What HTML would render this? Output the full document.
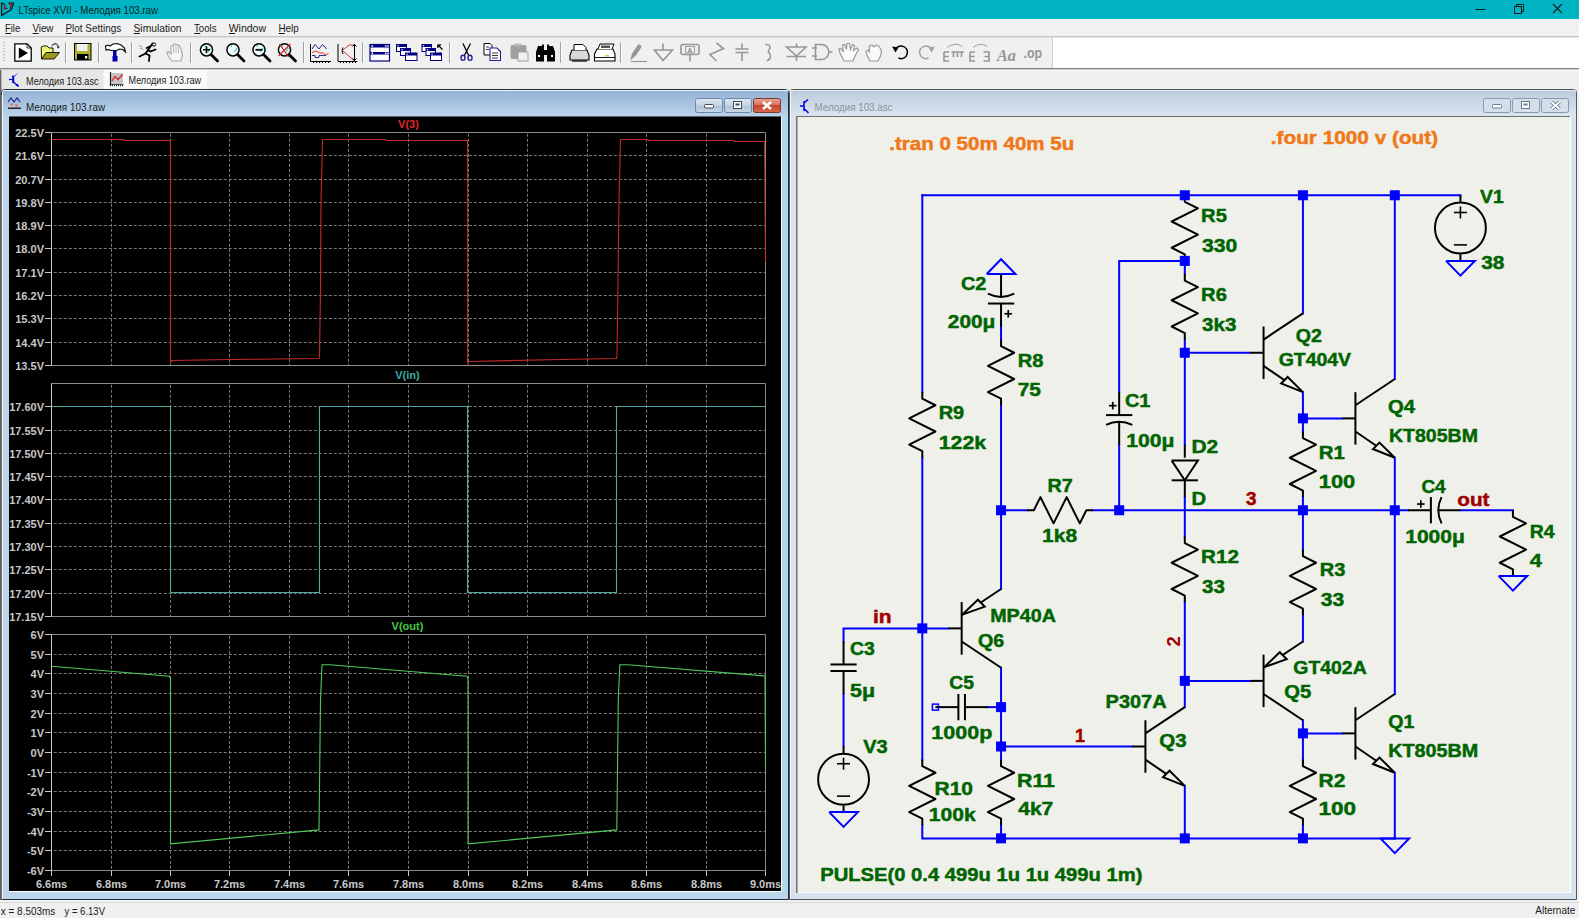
<!DOCTYPE html>
<html><head><meta charset="utf-8"><title>LTspice</title>
<style>html,body{margin:0;padding:0;width:1579px;height:918px;overflow:hidden;background:#f0f0f0}
svg{display:block;font-family:"Liberation Sans",sans-serif}</style></head>
<body><svg width="1579" height="918" viewBox="0 0 1579 918">
<rect x="0" y="0" width="1579" height="918" fill="#f0f0f0"/>
<rect x="0" y="0" width="1579" height="19" fill="#00b4c3"/>
<text x="18.50" y="13.60" font-size="11.6" font-weight="normal" fill="#0a1f24" text-anchor="start" textLength="139.5" lengthAdjust="spacingAndGlyphs" >LTspice XVII - Мелодия 103.raw</text>
<path d="M1.6 2.8 V15.4 L11.2 9.8 L13.6 3.2 H8.5 M1.6 2.8 L4.5 4.3" stroke="#101820" stroke-width="1.3" fill="none" stroke-linejoin="round"/>
<path d="M4.8 4.8 L4.6 8.6 H7.6 M8.6 3.8 H12.6 M11.2 3.8 L10.6 8.8" stroke="#801818" stroke-width="1.5" fill="none"/>
<path d="M1475.5 9.5 H1485.5" stroke="#1a1a1a" stroke-width="1"/>
<g stroke="#1a1a1a" stroke-width="1" fill="none"><rect x="1514.5" y="6.5" width="7" height="7"/><path d="M1516.5 6.5 V4.5 H1523.5 V11.5 H1521.5"/></g>
<path d="M1553 4 L1562 13 M1562 4 L1553 13" stroke="#1a1a1a" stroke-width="1.1"/>
<rect x="0" y="19" width="1579" height="17" fill="#f1f1f1"/>
<rect x="0" y="36" width="1579" height="1.6" fill="#c6c6c6"/>
<text x="4.90" y="31.80" font-size="11.5" font-weight="normal" fill="#1a1a1a" text-anchor="start" textLength="15.3" lengthAdjust="spacingAndGlyphs" >File</text>
<rect x="5.2" y="33" width="6" height="1" fill="#1a1a1a"/>
<text x="32.40" y="31.80" font-size="11.5" font-weight="normal" fill="#1a1a1a" text-anchor="start" textLength="21.0" lengthAdjust="spacingAndGlyphs" >View</text>
<rect x="32.7" y="33" width="6" height="1" fill="#1a1a1a"/>
<text x="65.40" y="31.80" font-size="11.5" font-weight="normal" fill="#1a1a1a" text-anchor="start" textLength="55.9" lengthAdjust="spacingAndGlyphs" >Plot Settings</text>
<rect x="65.7" y="33" width="6" height="1" fill="#1a1a1a"/>
<text x="133.50" y="31.80" font-size="11.5" font-weight="normal" fill="#1a1a1a" text-anchor="start" textLength="48.1" lengthAdjust="spacingAndGlyphs" >Simulation</text>
<rect x="133.8" y="33" width="6" height="1" fill="#1a1a1a"/>
<text x="194.00" y="31.80" font-size="11.5" font-weight="normal" fill="#1a1a1a" text-anchor="start" textLength="22.5" lengthAdjust="spacingAndGlyphs" >Tools</text>
<rect x="194.3" y="33" width="6" height="1" fill="#1a1a1a"/>
<text x="228.70" y="31.80" font-size="11.5" font-weight="normal" fill="#1a1a1a" text-anchor="start" textLength="37.3" lengthAdjust="spacingAndGlyphs" >Window</text>
<rect x="229.0" y="33" width="6" height="1" fill="#1a1a1a"/>
<text x="278.40" y="31.80" font-size="11.5" font-weight="normal" fill="#1a1a1a" text-anchor="start" textLength="20.4" lengthAdjust="spacingAndGlyphs" >Help</text>
<rect x="278.7" y="33" width="6" height="1" fill="#1a1a1a"/>
<rect x="0" y="37.6" width="1052" height="30.4" fill="#f0f0f0"/>
<rect x="1052" y="37.6" width="527" height="30.4" fill="#ffffff"/>
<rect x="1052" y="37" width="1" height="31" fill="#d0d0d0"/>
<rect x="0" y="68" width="1579" height="1.6" fill="#858585"/>
<rect x="0" y="69.6" width="1579" height="1" fill="#fafafa"/>
<rect x="3.5" y="42.0" width="1.2" height="1.2" fill="#a0a0a0"/>
<rect x="3.5" y="45.0" width="1.2" height="1.2" fill="#a0a0a0"/>
<rect x="3.5" y="48.0" width="1.2" height="1.2" fill="#a0a0a0"/>
<rect x="3.5" y="51.0" width="1.2" height="1.2" fill="#a0a0a0"/>
<rect x="3.5" y="54.0" width="1.2" height="1.2" fill="#a0a0a0"/>
<rect x="3.5" y="57.0" width="1.2" height="1.2" fill="#a0a0a0"/>
<rect x="3.5" y="60.0" width="1.2" height="1.2" fill="#a0a0a0"/>
<rect x="65" y="42" width="1" height="21" fill="#a0a0a0"/><rect x="66" y="42" width="1" height="21" fill="#fcfcfc"/>
<rect x="98" y="42" width="1" height="21" fill="#a0a0a0"/><rect x="99" y="42" width="1" height="21" fill="#fcfcfc"/>
<rect x="131" y="42" width="1" height="21" fill="#a0a0a0"/><rect x="132" y="42" width="1" height="21" fill="#fcfcfc"/>
<rect x="190" y="42" width="1" height="21" fill="#a0a0a0"/><rect x="191" y="42" width="1" height="21" fill="#fcfcfc"/>
<rect x="303" y="42" width="1" height="21" fill="#a0a0a0"/><rect x="304" y="42" width="1" height="21" fill="#fcfcfc"/>
<rect x="362" y="42" width="1" height="21" fill="#a0a0a0"/><rect x="363" y="42" width="1" height="21" fill="#fcfcfc"/>
<rect x="449" y="42" width="1" height="21" fill="#a0a0a0"/><rect x="450" y="42" width="1" height="21" fill="#fcfcfc"/>
<rect x="560" y="42" width="1" height="21" fill="#a0a0a0"/><rect x="561" y="42" width="1" height="21" fill="#fcfcfc"/>
<rect x="620" y="42" width="1" height="21" fill="#a0a0a0"/><rect x="621" y="42" width="1" height="21" fill="#fcfcfc"/>
<path d="M14.8 43.8 H27 L31.2 48 V61.2 H14.8 Z" fill="#fff" stroke="#000" stroke-width="1.3"/>
<path d="M27 43.8 V48 H31.2" fill="none" stroke="#000" stroke-width="0.8"/>
<path d="M18.8 47.5 L28 53 L18.8 58.6 Z" fill="#000"/>
<path d="M41.2 47 L43.5 46 L47 46 L49 48 L53 48 L53 53 L41.5 58.5 Z" fill="#f2f27a" stroke="#000" stroke-width="0.9"/>
<path d="M41.5 59 L46 52.5 L59.5 52.5 L54 59 Z" fill="#9c9c1a" stroke="#000" stroke-width="0.9"/>
<path d="M51.5 46 Q55 41.5 58.5 46" fill="none" stroke="#000" stroke-width="1"/><path d="M56.5 46.5 L59.5 46.5 L58.5 48.5 Z" fill="#000"/>
<rect x="74.5" y="43.5" width="16.5" height="16.5" fill="#b0b030" stroke="#000" stroke-width="1"/>
<rect x="77" y="44" width="10.5" height="7" fill="#f0f0f0"/>
<rect x="77" y="54" width="11.5" height="6" fill="#000"/><rect x="85" y="56" width="2.2" height="2.5" fill="#fff"/>
<path d="M105.5 46 L108 45 L110 46 L113 44 L117 43.5 L121 45 L124.5 48 L125.5 52 L123 49.5 L119.5 49 L116.5 50.5 L111 50.5 L108.5 49.5 L106 50 Z" fill="#fff" stroke="#000" stroke-width="1.1"/>
<rect x="113" y="50.5" width="3.5" height="6" fill="#0000b0"/><rect x="112.5" y="56" width="5" height="5.5" fill="#0000b0"/>
<g stroke="#000" stroke-width="1.8" fill="none" stroke-linecap="round"><path d="M152.5 43.5 L148 50 L145.5 53.5 L139.5 56.5 M148 50 L150.5 51.5 L155.5 49.5 M145.5 53.5 L149.5 55.5 L149 61 M146.5 48 L152 45.5"/></g>
<circle cx="154" cy="44.5" r="1.6" fill="#fff" stroke="#000" stroke-width="1"/>
<g stroke="#888" stroke-width="0.8"><path d="M139 45.5 L142.5 47 M140 48 L143.5 49.5"/></g>
<path d="M171.5 61 L168 55.5 L167 52 L168.5 51.5 L171 54 L171 46 L173 45.5 L174.5 44 L176.5 44.5 L178.5 45 L180 46.5 L181 49 L182.5 55 L181 61 Z" fill="#f4f4f4" stroke="#a8a8a8" stroke-width="1.1"/>
<path d="M173.5 46 V53 M176 44.5 V53 M178.5 45.5 V53" stroke="#b0b0b0" stroke-width="0.8"/>
<circle cx="206.5" cy="49.8" r="6.1" fill="#f2fcfc" stroke="#000" stroke-width="1.5"/>
<path d="M204.0 45.5 L205.5 46.5 M208.0 52 L210.5 48" stroke="#30d0d0" stroke-width="1.3" fill="none"/>
<path d="M211.0 54.5 L217.5 61" stroke="#000" stroke-width="2.8" stroke-linecap="round"/>
<path d="M203.0 49.8 H210.0 M206.5 46.3 V53.3" stroke="#000" stroke-width="1.6"/>
<circle cx="233.0" cy="49.8" r="6.1" fill="#f2fcfc" stroke="#000" stroke-width="1.5"/>
<path d="M230.5 45.5 L232.0 46.5 M234.5 52 L237.0 48" stroke="#30d0d0" stroke-width="1.3" fill="none"/>
<path d="M237.5 54.5 L244.0 61" stroke="#000" stroke-width="2.8" stroke-linecap="round"/>
<circle cx="259.0" cy="49.8" r="6.1" fill="#f2fcfc" stroke="#000" stroke-width="1.5"/>
<path d="M256.5 45.5 L258.0 46.5 M260.5 52 L263.0 48" stroke="#30d0d0" stroke-width="1.3" fill="none"/>
<path d="M263.5 54.5 L270.0 61" stroke="#000" stroke-width="2.8" stroke-linecap="round"/>
<path d="M255.5 49.8 H262.5" stroke="#000" stroke-width="1.8"/>
<circle cx="284.5" cy="49.8" r="6.1" fill="#f2fcfc" stroke="#000" stroke-width="1.5"/>
<path d="M282.0 45.5 L283.5 46.5 M286.0 52 L288.5 48" stroke="#30d0d0" stroke-width="1.3" fill="none"/>
<path d="M289.0 54.5 L295.5 61" stroke="#000" stroke-width="2.8" stroke-linecap="round"/>
<path d="M279.5 44 L288.5 57 M290.5 44 L278.5 56" stroke="#e02020" stroke-width="1.2"/>
<g fill="none" stroke-width="1"><path d="M310.5 44 V61.5 H331" stroke="#000"/><path d="M312 49 L315 44.5 L319 49 L322.5 44.5 L326.5 49" stroke="#202090"/><path d="M312 52.5 L316 51 L320 53 L323 53 L326 55 L328.5 53.5" stroke="#e03030"/><path d="M312 55.5 H315 V57.5 H319 V55.5 H326" stroke="#303090"/></g>
<g fill="none" stroke-width="1"><path d="M338 44 V61.5 H357.5" stroke="#000"/><path d="M343 50 L349 45 H354 M343 51 L354 60.5" stroke="#e03030"/><path d="M354.5 44.5 V60.5 M352.5 46.5 L354.5 44.5 L356.5 46.5 M352.5 58.5 L354.5 60.5 L356.5 58.5" stroke="#000"/><path d="M343 47.5 Q341 51 343 54" stroke="#000"/></g>
<rect x="313.0" y="61.5" width="1" height="1.5" fill="#000"/><rect x="340.0" y="61.5" width="1" height="1.5" fill="#000"/>
<rect x="316.0" y="61.5" width="1" height="1.5" fill="#000"/><rect x="343.0" y="61.5" width="1" height="1.5" fill="#000"/>
<rect x="319.0" y="61.5" width="1" height="1.5" fill="#000"/><rect x="346.0" y="61.5" width="1" height="1.5" fill="#000"/>
<rect x="322.0" y="61.5" width="1" height="1.5" fill="#000"/><rect x="349.0" y="61.5" width="1" height="1.5" fill="#000"/>
<rect x="325.0" y="61.5" width="1" height="1.5" fill="#000"/><rect x="352.0" y="61.5" width="1" height="1.5" fill="#000"/>
<rect x="328.0" y="61.5" width="1" height="1.5" fill="#000"/><rect x="355.0" y="61.5" width="1" height="1.5" fill="#000"/>
<rect x="370" y="44.5" width="19.5" height="16.5" fill="#fff" stroke="#000080" stroke-width="1.2"/><rect x="370" y="44.5" width="19.5" height="3" fill="#000080"/><rect x="370" y="52" width="19.5" height="2.5" fill="#000080"/>
<rect x="396.5" y="44.5" width="10.0" height="7.0" fill="#fff" stroke="#000080" stroke-width="1"/><rect x="396.5" y="44.5" width="10.0" height="2.5" fill="#000080"/>
<rect x="400.5" y="48.5" width="10.0" height="7.0" fill="#fff" stroke="#000080" stroke-width="1"/><rect x="400.5" y="48.5" width="10.0" height="2.5" fill="#000080"/>
<rect x="405.5" y="53.0" width="11.5" height="7.5" fill="#fff" stroke="#000080" stroke-width="1"/><rect x="405.5" y="53.0" width="11.5" height="2.5" fill="#000080"/>
<rect x="422.0" y="44.5" width="9.5" height="7.0" fill="#fff" stroke="#000080" stroke-width="1"/><rect x="422.0" y="44.5" width="9.5" height="2.5" fill="#000080"/>
<rect x="426.0" y="48.5" width="9.5" height="7.0" fill="#fff" stroke="#000080" stroke-width="1"/><rect x="426.0" y="48.5" width="9.5" height="2.5" fill="#000080"/>
<rect x="430.5" y="53.0" width="11.0" height="7.5" fill="#fff" stroke="#000080" stroke-width="1"/><rect x="430.5" y="53.0" width="11.0" height="2.5" fill="#000080"/>
<path d="M442.5 49.5 L438 45 M437.8 44.8 H441 M437.8 44.8 V48" stroke="#000" stroke-width="1.2" fill="none"/>
<rect x="371.5" y="45.2" width="1.5" height="1.5" fill="#fff"/><rect x="385" y="45.2" width="1.5" height="1.5" fill="#fff"/><rect x="387.3" y="45.2" width="1.5" height="1.5" fill="#fff"/>
<rect x="371.5" y="52.5" width="1.5" height="1.5" fill="#fff"/><rect x="385" y="52.5" width="1.5" height="1.5" fill="#fff"/><rect x="387.3" y="52.5" width="1.5" height="1.5" fill="#fff"/>
<rect x="397.5" y="45.1" width="1.2" height="1.2" fill="#fff"/>
<rect x="401.5" y="49.1" width="1.2" height="1.2" fill="#fff"/>
<rect x="406.5" y="53.6" width="1.2" height="1.2" fill="#fff"/>
<rect x="423.0" y="45.1" width="1.2" height="1.2" fill="#fff"/>
<rect x="427.0" y="49.1" width="1.2" height="1.2" fill="#fff"/>
<rect x="431.5" y="53.6" width="1.2" height="1.2" fill="#fff"/>
<g fill="none" stroke="#202090" stroke-width="1.4"><ellipse cx="463" cy="57.8" rx="2" ry="2.6"/><ellipse cx="470" cy="57.8" rx="2" ry="2.6"/></g><path d="M463 43.5 L468.5 55.2 M470.5 43.5 L464.5 55.2" stroke="#000" stroke-width="1.3"/>
<path d="M484 43.5 H490 L492 45.5 V55 H484 Z" fill="#fff" stroke="#000" stroke-width="1"/><path d="M490 48 H497 L500.5 51.5 V60.5 H490 Z" fill="#fff" stroke="#202090" stroke-width="1.1"/><path d="M492 53 H498 M492 55.5 H498 M492 58 H498 M486 47 H489 M486 49.5 H489" stroke="#000" stroke-width="0.8"/>
<rect x="510.5" y="45" width="16" height="14" rx="2" fill="#a0a0a0"/><rect x="514" y="43.5" width="7" height="3" fill="#b8b8b8"/><rect x="518" y="52" width="10" height="9" fill="#f0f0f0" stroke="#a0a0a0" stroke-width="1"/>
<path d="M536 61.5 V52 L538 46 H542 V44.5 H544 V61.5 Z M555 61.5 V52 L553 46 H549 V44.5 H547 V61.5 Z" fill="#000"/><rect x="544" y="50" width="3" height="5" fill="#000"/><rect x="538" y="55" width="2" height="2" fill="#fff"/><rect x="551" y="55" width="2" height="2" fill="#fff"/>
<path d="M570 55 L572 50 H587 L589 55 V60 H570 Z" fill="#d8d8d8" stroke="#000" stroke-width="1.1"/><path d="M574 50 V44.5 H583 L586 47.5 V50" fill="#fff" stroke="#000" stroke-width="1"/><path d="M572 61 H587" stroke="#000" stroke-width="1.2"/>
<path d="M594.5 54 L597 49 H613 L615 54 V61 H594.5 Z" fill="#fff" stroke="#000" stroke-width="1.1"/><path d="M598 49 L600 44 H614 L612 49" fill="#fff" stroke="#000" stroke-width="1"/><rect x="601" y="45.5" width="9" height="2.5" fill="#555"/><path d="M594.5 57.5 H615" stroke="#000" stroke-width="0.9"/><rect x="605" y="55" width="4" height="1.5" fill="#d0d040"/>
<g stroke="#969696" fill="none" stroke-width="1.6"><path d="M631 61.5 L647 61.5" stroke-width="1.2"/><path d="M630.8 59.5 L632.5 53.5 L638.5 44.5 L641.5 46.5 L635.5 55.5 Z" fill="#969696" stroke-width="0.8"/><path d="M663 43.5 V50 M654.5 50 H672.5 L663 60.5 Z"/><rect x="681" y="44.5" width="18" height="10" rx="2"/><path d="M690 54.5 V61.5"/><path d="M716.5 43 L723.5 48.5 L710 54.5 L716.5 61"/><path d="M742 43.5 V49 M735.5 49 H748.5 M735.5 52.5 H748.5 M742 52.5 V61"/><path d="M765 44.5 Q771 44 770 48.5 Q767 51 769.5 53.5 Q772.5 58 767 61"/><path d="M796.5 43.5 V47 M786.5 47 H806 L796.5 56 Z M786.5 56.5 H806 M796.5 56 V61"/><path d="M812 48 H817 M812 56 H817 M815.5 44.5 V59.5 H821 Q828 59.5 829 52 Q828 44.5 821 44.5 Z M829 52 H832.5"/></g>
<rect x="685.5" y="46.5" width="9" height="6.5" fill="none" stroke="#969696" stroke-width="0.9"/><text x="690" y="52.6" font-size="8" font-weight="bold" fill="#969696" text-anchor="middle">A</text>
<path d="M844 61 L840 53 L839 49 L841 48.5 L843.5 52 L842.5 45 L844.5 44.5 L846.5 49.5 L847 43.5 L849.5 43.5 L850.5 49.5 L852.5 44.5 L854.5 45.5 L853.5 50.5 L856.5 48 L858.5 49.5 L855 56 L853 61 Z" fill="#fafafa" stroke="#9a9a9a" stroke-width="1.2"/>
<path d="M870 61 L867 55 L866 51.5 L868 50 L869.5 52 L869.5 46 L872 45 L874 47 L876 45 L878.5 46 L880 48 L881.5 51 L880.5 56 L878 61 Z" fill="#fafafa" stroke="#9a9a9a" stroke-width="1.2"/>
<path d="M895 49.5 Q899 44 904.5 47 Q909.5 50.5 906 56.5 Q902.5 60 898.5 58" fill="none" stroke="#000" stroke-width="1.4"/><path d="M892 46.5 L895.5 52.5 L898.5 47.5 Z" fill="#000"/>
<path d="M932 49.5 Q928 44 922.5 47 Q917.5 50.5 921 56.5 Q924.5 60 928.5 58" fill="none" stroke="#a0a0a0" stroke-width="1.4"/><path d="M935 46.5 L931.5 52.5 L928.5 47.5 Z" fill="#a0a0a0"/>
<g fill="none" stroke="#969696" stroke-width="1.6"><path d="M944 52 V61 H949 M944 56.5 H948.5 M944 52 H949"/><path d="M951.5 52 H964 M953.5 52 V57 M957.5 52 V57 M961.5 52 V57"/><path d="M970 52 V61 H975 M970 56.5 H974.5 M970 52 H975"/><path d="M983.5 52 H989 V61 H983.5 M984.5 56.5 H989"/></g>
<path d="M947 47.5 Q955 41.5 962.5 46.5 M973 47.5 Q980 41.5 987.5 46.5" fill="none" stroke="#969696" stroke-width="0.9"/>
<text x="997" y="60.5" font-size="16" font-style="italic" font-weight="bold" fill="#969696" textLength="19" lengthAdjust="spacingAndGlyphs" font-family="Liberation Serif">Aa</text>
<text x="1023.5" y="57.5" font-size="15" font-weight="bold" fill="#969696" textLength="18.5" lengthAdjust="spacingAndGlyphs">.op</text>
<rect x="2" y="70" width="101" height="19" fill="#e6e6e6"/>
<rect x="104" y="70" width="103" height="19" fill="#fafafa"/>
<text x="26.00" y="84.50" font-size="11" font-weight="normal" fill="#1a1a1a" text-anchor="start" textLength="72.5" lengthAdjust="spacingAndGlyphs" >Мелодия 103.asc</text>
<text x="128.50" y="83.50" font-size="11" font-weight="normal" fill="#1a1a1a" text-anchor="start" textLength="72.5" lengthAdjust="spacingAndGlyphs" >Мелодия 103.raw</text>
<g stroke="#0000e0" fill="none"><path d="M9 79.5 H12.5" stroke-width="1.2"/><path d="M13.2 75.5 V83" stroke-width="2"/><path d="M13.5 77 L17.8 73.2" stroke-width="1" stroke-dasharray="1.2 0.8"/><path d="M13.5 82 L18.5 86.5" stroke-width="1.2"/></g><path d="M15.5 85.5 L18.8 86.8 L17.8 83.5 Z" fill="#0000e0"/>
<g><rect x="111" y="73" width="12" height="11" fill="#c4c4c4"/><path d="M110.5 72 V86" stroke="#222" stroke-width="1.2" fill="none"/><path d="M110 85.5 H123.5" stroke="#222" stroke-width="1.5" stroke-dasharray="1 1" fill="none"/><path d="M111 84.5 H123.5" stroke="#222" stroke-width="0.8" fill="none"/><path d="M112 81 L115 76.5 L118 79.5 L122.5 74.5" stroke="#e02020" stroke-width="1.3" fill="none"/></g>
<rect x="0" y="70" width="1.4" height="830" fill="#646464"/>
<defs><linearGradient id="actT" x1="0" y1="0" x2="0" y2="1"><stop offset="0" stop-color="#93b2d3"/><stop offset="1" stop-color="#bcd4ec"/></linearGradient><linearGradient id="inaT" x1="0" y1="0" x2="0" y2="1"><stop offset="0" stop-color="#bccbdb"/><stop offset="1" stop-color="#d9e5f1"/></linearGradient><linearGradient id="redB" x1="0" y1="0" x2="0" y2="1"><stop offset="0" stop-color="#e8a598"/><stop offset="0.45" stop-color="#d9735e"/><stop offset="0.5" stop-color="#c8442c"/><stop offset="1" stop-color="#d66a4c"/></linearGradient><linearGradient id="btnB" x1="0" y1="0" x2="0" y2="1"><stop offset="0" stop-color="#dfe8f2"/><stop offset="0.5" stop-color="#c3d3e4"/><stop offset="0.55" stop-color="#aec3d9"/><stop offset="1" stop-color="#c8d8e8"/></linearGradient></defs>
<path d="M1.5 899.5 V92.5 Q1.5 89.5 4.5 89.5 H785.5 Q788.5 89.5 788.5 92.5 V899.5 Z" fill="#b9d1ea" stroke="#1e2a36" stroke-width="1"/>
<rect x="1" y="95" width="1" height="805" fill="#707070"/>
<rect x="3" y="90" width="785" height="27" fill="url(#actT)"/>
<rect x="3" y="117" width="6" height="782" fill="#bcd3ea"/>
<rect x="781" y="117" width="7" height="782" fill="#b0d8ef"/>
<rect x="3" y="892" width="785" height="7" fill="#bcd6ec"/>
<rect x="3" y="90" width="785" height="1" fill="#f4f8fc"/>
<rect x="2" y="91" width="1" height="808" fill="#f4f8fc"/>
<text x="26.00" y="110.50" font-size="11" font-weight="normal" fill="#101820" text-anchor="start" textLength="79.0" lengthAdjust="spacingAndGlyphs" >Мелодия 103.raw</text>
<g><path d="M8 102 L11 98 L14 102 L17 98 L20 102" stroke="#2020a0" stroke-width="1.2" fill="none"/><rect x="10" y="103.5" width="3" height="2" fill="#e07070"/><rect x="15" y="104.5" width="3" height="2" fill="#e07070"/><rect x="8" y="107.5" width="13" height="1.5" fill="#222"/></g>
<rect x="695.5" y="98.5" width="27" height="14" rx="2" fill="url(#btnB)" stroke="#6d87a6" stroke-width="1"/>
<rect x="704.5" y="104.5" width="9" height="3.5" rx="1" fill="#fff" stroke="#3c4a5a" stroke-width="1"/>
<rect x="724.5" y="98.5" width="27" height="14" rx="2" fill="url(#btnB)" stroke="#6d87a6" stroke-width="1"/>
<rect x="733.5" y="101.5" width="8" height="7" fill="#fff" stroke="#3c4a5a" stroke-width="1"/><rect x="735.5" y="103.5" width="4" height="2" fill="#3c4a5a"/>
<rect x="753.5" y="98.5" width="27" height="14" rx="2" fill="url(#redB)" stroke="#7a3a30" stroke-width="1"/>
<path d="M763 102 L771 109 M771 102 L763 109" stroke="#fff" stroke-width="2.4"/>
<rect x="9" y="116" width="772" height="1" fill="#55606a"/><rect x="9" y="117" width="772" height="774" fill="#000"/>
<rect x="781" y="117" width="1" height="775" fill="#ffffff"/>
<rect x="9" y="891" width="773" height="1" fill="#ffffff"/>
<path d="M45 132.5 H51.5" stroke="#c8c8c8" stroke-width="1"/>
<text x="44" y="136.5" font-size="11" font-weight="bold" fill="#c8c8c8" text-anchor="end">22.5V</text>
<path d="M52.0 155.5 H765.5" stroke="#7a7a7a" stroke-width="1" stroke-dasharray="3 2" stroke-dashoffset="3.2"/>
<path d="M45 155.5 H51.5" stroke="#c8c8c8" stroke-width="1"/>
<text x="44" y="159.5" font-size="11" font-weight="bold" fill="#c8c8c8" text-anchor="end">21.6V</text>
<path d="M52.0 179.5 H765.5" stroke="#7a7a7a" stroke-width="1" stroke-dasharray="3 2" stroke-dashoffset="3.2"/>
<path d="M45 179.5 H51.5" stroke="#c8c8c8" stroke-width="1"/>
<text x="44" y="183.5" font-size="11" font-weight="bold" fill="#c8c8c8" text-anchor="end">20.7V</text>
<path d="M52.0 202.5 H765.5" stroke="#7a7a7a" stroke-width="1" stroke-dasharray="3 2" stroke-dashoffset="3.2"/>
<path d="M45 202.5 H51.5" stroke="#c8c8c8" stroke-width="1"/>
<text x="44" y="206.5" font-size="11" font-weight="bold" fill="#c8c8c8" text-anchor="end">19.8V</text>
<path d="M52.0 225.5 H765.5" stroke="#7a7a7a" stroke-width="1" stroke-dasharray="3 2" stroke-dashoffset="3.2"/>
<path d="M45 225.5 H51.5" stroke="#c8c8c8" stroke-width="1"/>
<text x="44" y="229.5" font-size="11" font-weight="bold" fill="#c8c8c8" text-anchor="end">18.9V</text>
<path d="M52.0 248.5 H765.5" stroke="#7a7a7a" stroke-width="1" stroke-dasharray="3 2" stroke-dashoffset="3.2"/>
<path d="M45 248.5 H51.5" stroke="#c8c8c8" stroke-width="1"/>
<text x="44" y="252.5" font-size="11" font-weight="bold" fill="#c8c8c8" text-anchor="end">18.0V</text>
<path d="M52.0 272.5 H765.5" stroke="#7a7a7a" stroke-width="1" stroke-dasharray="3 2" stroke-dashoffset="3.2"/>
<path d="M45 272.5 H51.5" stroke="#c8c8c8" stroke-width="1"/>
<text x="44" y="276.5" font-size="11" font-weight="bold" fill="#c8c8c8" text-anchor="end">17.1V</text>
<path d="M52.0 295.5 H765.5" stroke="#7a7a7a" stroke-width="1" stroke-dasharray="3 2" stroke-dashoffset="3.2"/>
<path d="M45 295.5 H51.5" stroke="#c8c8c8" stroke-width="1"/>
<text x="44" y="299.5" font-size="11" font-weight="bold" fill="#c8c8c8" text-anchor="end">16.2V</text>
<path d="M52.0 318.5 H765.5" stroke="#7a7a7a" stroke-width="1" stroke-dasharray="3 2" stroke-dashoffset="3.2"/>
<path d="M45 318.5 H51.5" stroke="#c8c8c8" stroke-width="1"/>
<text x="44" y="322.5" font-size="11" font-weight="bold" fill="#c8c8c8" text-anchor="end">15.3V</text>
<path d="M52.0 342.5 H765.5" stroke="#7a7a7a" stroke-width="1" stroke-dasharray="3 2" stroke-dashoffset="3.2"/>
<path d="M45 342.5 H51.5" stroke="#c8c8c8" stroke-width="1"/>
<text x="44" y="346.5" font-size="11" font-weight="bold" fill="#c8c8c8" text-anchor="end">14.4V</text>
<path d="M45 365.5 H51.5" stroke="#c8c8c8" stroke-width="1"/>
<text x="44" y="369.5" font-size="11" font-weight="bold" fill="#c8c8c8" text-anchor="end">13.5V</text>
<path d="M111.5 133.0 V365.5" stroke="#7a7a7a" stroke-width="1" stroke-dasharray="3 2" stroke-dashoffset="4.2"/>
<path d="M170.5 133.0 V365.5" stroke="#7a7a7a" stroke-width="1" stroke-dasharray="3 2" stroke-dashoffset="4.2"/>
<path d="M229.5 133.0 V365.5" stroke="#7a7a7a" stroke-width="1" stroke-dasharray="3 2" stroke-dashoffset="4.2"/>
<path d="M289.5 133.0 V365.5" stroke="#7a7a7a" stroke-width="1" stroke-dasharray="3 2" stroke-dashoffset="4.2"/>
<path d="M348.5 133.0 V365.5" stroke="#7a7a7a" stroke-width="1" stroke-dasharray="3 2" stroke-dashoffset="4.2"/>
<path d="M408.5 133.0 V365.5" stroke="#7a7a7a" stroke-width="1" stroke-dasharray="3 2" stroke-dashoffset="4.2"/>
<path d="M468.5 133.0 V365.5" stroke="#7a7a7a" stroke-width="1" stroke-dasharray="3 2" stroke-dashoffset="4.2"/>
<path d="M527.5 133.0 V365.5" stroke="#7a7a7a" stroke-width="1" stroke-dasharray="3 2" stroke-dashoffset="4.2"/>
<path d="M587.5 133.0 V365.5" stroke="#7a7a7a" stroke-width="1" stroke-dasharray="3 2" stroke-dashoffset="4.2"/>
<path d="M646.5 133.0 V365.5" stroke="#7a7a7a" stroke-width="1" stroke-dasharray="3 2" stroke-dashoffset="4.2"/>
<path d="M706.5 133.0 V365.5" stroke="#7a7a7a" stroke-width="1" stroke-dasharray="3 2" stroke-dashoffset="4.2"/>
<path d="M51.5 132.5 H765.5 V365.5" stroke="#8c8c8c" stroke-width="1" fill="none"/>
<path d="M51.5 365.5 H765.5" stroke="#8c8c8c" stroke-width="1" fill="none"/>
<path d="M51.5 132.5 V365.5" stroke="#c8c8c8" stroke-width="1" fill="none"/>
<path d="M52.0 406.5 H765.5" stroke="#7a7a7a" stroke-width="1" stroke-dasharray="3 2" stroke-dashoffset="3.2"/>
<path d="M45 406.5 H51.5" stroke="#c8c8c8" stroke-width="1"/>
<text x="44" y="410.5" font-size="11" font-weight="bold" fill="#c8c8c8" text-anchor="end">17.60V</text>
<path d="M52.0 430.5 H765.5" stroke="#7a7a7a" stroke-width="1" stroke-dasharray="3 2" stroke-dashoffset="3.2"/>
<path d="M45 430.5 H51.5" stroke="#c8c8c8" stroke-width="1"/>
<text x="44" y="434.5" font-size="11" font-weight="bold" fill="#c8c8c8" text-anchor="end">17.55V</text>
<path d="M52.0 453.5 H765.5" stroke="#7a7a7a" stroke-width="1" stroke-dasharray="3 2" stroke-dashoffset="3.2"/>
<path d="M45 453.5 H51.5" stroke="#c8c8c8" stroke-width="1"/>
<text x="44" y="457.5" font-size="11" font-weight="bold" fill="#c8c8c8" text-anchor="end">17.50V</text>
<path d="M52.0 476.5 H765.5" stroke="#7a7a7a" stroke-width="1" stroke-dasharray="3 2" stroke-dashoffset="3.2"/>
<path d="M45 476.5 H51.5" stroke="#c8c8c8" stroke-width="1"/>
<text x="44" y="480.5" font-size="11" font-weight="bold" fill="#c8c8c8" text-anchor="end">17.45V</text>
<path d="M52.0 499.5 H765.5" stroke="#7a7a7a" stroke-width="1" stroke-dasharray="3 2" stroke-dashoffset="3.2"/>
<path d="M45 499.5 H51.5" stroke="#c8c8c8" stroke-width="1"/>
<text x="44" y="503.5" font-size="11" font-weight="bold" fill="#c8c8c8" text-anchor="end">17.40V</text>
<path d="M52.0 523.5 H765.5" stroke="#7a7a7a" stroke-width="1" stroke-dasharray="3 2" stroke-dashoffset="3.2"/>
<path d="M45 523.5 H51.5" stroke="#c8c8c8" stroke-width="1"/>
<text x="44" y="527.5" font-size="11" font-weight="bold" fill="#c8c8c8" text-anchor="end">17.35V</text>
<path d="M52.0 546.5 H765.5" stroke="#7a7a7a" stroke-width="1" stroke-dasharray="3 2" stroke-dashoffset="3.2"/>
<path d="M45 546.5 H51.5" stroke="#c8c8c8" stroke-width="1"/>
<text x="44" y="550.5" font-size="11" font-weight="bold" fill="#c8c8c8" text-anchor="end">17.30V</text>
<path d="M52.0 569.5 H765.5" stroke="#7a7a7a" stroke-width="1" stroke-dasharray="3 2" stroke-dashoffset="3.2"/>
<path d="M45 569.5 H51.5" stroke="#c8c8c8" stroke-width="1"/>
<text x="44" y="573.5" font-size="11" font-weight="bold" fill="#c8c8c8" text-anchor="end">17.25V</text>
<path d="M52.0 593.5 H765.5" stroke="#7a7a7a" stroke-width="1" stroke-dasharray="3 2" stroke-dashoffset="3.2"/>
<path d="M45 593.5 H51.5" stroke="#c8c8c8" stroke-width="1"/>
<text x="44" y="597.5" font-size="11" font-weight="bold" fill="#c8c8c8" text-anchor="end">17.20V</text>
<path d="M45 616.5 H51.5" stroke="#c8c8c8" stroke-width="1"/>
<text x="44" y="620.5" font-size="11" font-weight="bold" fill="#c8c8c8" text-anchor="end">17.15V</text>
<path d="M111.5 384.0 V616.5" stroke="#7a7a7a" stroke-width="1" stroke-dasharray="3 2" stroke-dashoffset="4.2"/>
<path d="M170.5 384.0 V616.5" stroke="#7a7a7a" stroke-width="1" stroke-dasharray="3 2" stroke-dashoffset="4.2"/>
<path d="M229.5 384.0 V616.5" stroke="#7a7a7a" stroke-width="1" stroke-dasharray="3 2" stroke-dashoffset="4.2"/>
<path d="M289.5 384.0 V616.5" stroke="#7a7a7a" stroke-width="1" stroke-dasharray="3 2" stroke-dashoffset="4.2"/>
<path d="M348.5 384.0 V616.5" stroke="#7a7a7a" stroke-width="1" stroke-dasharray="3 2" stroke-dashoffset="4.2"/>
<path d="M408.5 384.0 V616.5" stroke="#7a7a7a" stroke-width="1" stroke-dasharray="3 2" stroke-dashoffset="4.2"/>
<path d="M468.5 384.0 V616.5" stroke="#7a7a7a" stroke-width="1" stroke-dasharray="3 2" stroke-dashoffset="4.2"/>
<path d="M527.5 384.0 V616.5" stroke="#7a7a7a" stroke-width="1" stroke-dasharray="3 2" stroke-dashoffset="4.2"/>
<path d="M587.5 384.0 V616.5" stroke="#7a7a7a" stroke-width="1" stroke-dasharray="3 2" stroke-dashoffset="4.2"/>
<path d="M646.5 384.0 V616.5" stroke="#7a7a7a" stroke-width="1" stroke-dasharray="3 2" stroke-dashoffset="4.2"/>
<path d="M706.5 384.0 V616.5" stroke="#7a7a7a" stroke-width="1" stroke-dasharray="3 2" stroke-dashoffset="4.2"/>
<path d="M51.5 383.5 H765.5 V616.5" stroke="#8c8c8c" stroke-width="1" fill="none"/>
<path d="M51.5 616.5 H765.5" stroke="#8c8c8c" stroke-width="1" fill="none"/>
<path d="M51.5 383.5 V616.5" stroke="#c8c8c8" stroke-width="1" fill="none"/>
<path d="M45 634.5 H51.5" stroke="#c8c8c8" stroke-width="1"/>
<text x="44" y="638.5" font-size="11" font-weight="bold" fill="#c8c8c8" text-anchor="end">6V</text>
<path d="M52.0 654.5 H765.5" stroke="#7a7a7a" stroke-width="1" stroke-dasharray="3 2" stroke-dashoffset="3.2"/>
<path d="M45 654.5 H51.5" stroke="#c8c8c8" stroke-width="1"/>
<text x="44" y="658.5" font-size="11" font-weight="bold" fill="#c8c8c8" text-anchor="end">5V</text>
<path d="M52.0 673.5 H765.5" stroke="#7a7a7a" stroke-width="1" stroke-dasharray="3 2" stroke-dashoffset="3.2"/>
<path d="M45 673.5 H51.5" stroke="#c8c8c8" stroke-width="1"/>
<text x="44" y="677.5" font-size="11" font-weight="bold" fill="#c8c8c8" text-anchor="end">4V</text>
<path d="M52.0 693.5 H765.5" stroke="#7a7a7a" stroke-width="1" stroke-dasharray="3 2" stroke-dashoffset="3.2"/>
<path d="M45 693.5 H51.5" stroke="#c8c8c8" stroke-width="1"/>
<text x="44" y="697.5" font-size="11" font-weight="bold" fill="#c8c8c8" text-anchor="end">3V</text>
<path d="M52.0 713.5 H765.5" stroke="#7a7a7a" stroke-width="1" stroke-dasharray="3 2" stroke-dashoffset="3.2"/>
<path d="M45 713.5 H51.5" stroke="#c8c8c8" stroke-width="1"/>
<text x="44" y="717.5" font-size="11" font-weight="bold" fill="#c8c8c8" text-anchor="end">2V</text>
<path d="M52.0 732.5 H765.5" stroke="#7a7a7a" stroke-width="1" stroke-dasharray="3 2" stroke-dashoffset="3.2"/>
<path d="M45 732.5 H51.5" stroke="#c8c8c8" stroke-width="1"/>
<text x="44" y="736.5" font-size="11" font-weight="bold" fill="#c8c8c8" text-anchor="end">1V</text>
<path d="M52.0 752.5 H765.5" stroke="#7a7a7a" stroke-width="1" stroke-dasharray="3 2" stroke-dashoffset="3.2"/>
<path d="M45 752.5 H51.5" stroke="#c8c8c8" stroke-width="1"/>
<text x="44" y="756.5" font-size="11" font-weight="bold" fill="#c8c8c8" text-anchor="end">0V</text>
<path d="M52.0 772.5 H765.5" stroke="#7a7a7a" stroke-width="1" stroke-dasharray="3 2" stroke-dashoffset="3.2"/>
<path d="M45 772.5 H51.5" stroke="#c8c8c8" stroke-width="1"/>
<text x="44" y="776.5" font-size="11" font-weight="bold" fill="#c8c8c8" text-anchor="end">-1V</text>
<path d="M52.0 791.5 H765.5" stroke="#7a7a7a" stroke-width="1" stroke-dasharray="3 2" stroke-dashoffset="3.2"/>
<path d="M45 791.5 H51.5" stroke="#c8c8c8" stroke-width="1"/>
<text x="44" y="795.5" font-size="11" font-weight="bold" fill="#c8c8c8" text-anchor="end">-2V</text>
<path d="M52.0 811.5 H765.5" stroke="#7a7a7a" stroke-width="1" stroke-dasharray="3 2" stroke-dashoffset="3.2"/>
<path d="M45 811.5 H51.5" stroke="#c8c8c8" stroke-width="1"/>
<text x="44" y="815.5" font-size="11" font-weight="bold" fill="#c8c8c8" text-anchor="end">-3V</text>
<path d="M52.0 831.5 H765.5" stroke="#7a7a7a" stroke-width="1" stroke-dasharray="3 2" stroke-dashoffset="3.2"/>
<path d="M45 831.5 H51.5" stroke="#c8c8c8" stroke-width="1"/>
<text x="44" y="835.5" font-size="11" font-weight="bold" fill="#c8c8c8" text-anchor="end">-4V</text>
<path d="M52.0 850.5 H765.5" stroke="#7a7a7a" stroke-width="1" stroke-dasharray="3 2" stroke-dashoffset="3.2"/>
<path d="M45 850.5 H51.5" stroke="#c8c8c8" stroke-width="1"/>
<text x="44" y="854.5" font-size="11" font-weight="bold" fill="#c8c8c8" text-anchor="end">-5V</text>
<path d="M45 870.5 H51.5" stroke="#c8c8c8" stroke-width="1"/>
<text x="44" y="874.5" font-size="11" font-weight="bold" fill="#c8c8c8" text-anchor="end">-6V</text>
<path d="M111.5 635.0 V870.5" stroke="#7a7a7a" stroke-width="1" stroke-dasharray="3 2" stroke-dashoffset="4.2"/>
<path d="M170.5 635.0 V870.5" stroke="#7a7a7a" stroke-width="1" stroke-dasharray="3 2" stroke-dashoffset="4.2"/>
<path d="M229.5 635.0 V870.5" stroke="#7a7a7a" stroke-width="1" stroke-dasharray="3 2" stroke-dashoffset="4.2"/>
<path d="M289.5 635.0 V870.5" stroke="#7a7a7a" stroke-width="1" stroke-dasharray="3 2" stroke-dashoffset="4.2"/>
<path d="M348.5 635.0 V870.5" stroke="#7a7a7a" stroke-width="1" stroke-dasharray="3 2" stroke-dashoffset="4.2"/>
<path d="M408.5 635.0 V870.5" stroke="#7a7a7a" stroke-width="1" stroke-dasharray="3 2" stroke-dashoffset="4.2"/>
<path d="M468.5 635.0 V870.5" stroke="#7a7a7a" stroke-width="1" stroke-dasharray="3 2" stroke-dashoffset="4.2"/>
<path d="M527.5 635.0 V870.5" stroke="#7a7a7a" stroke-width="1" stroke-dasharray="3 2" stroke-dashoffset="4.2"/>
<path d="M587.5 635.0 V870.5" stroke="#7a7a7a" stroke-width="1" stroke-dasharray="3 2" stroke-dashoffset="4.2"/>
<path d="M646.5 635.0 V870.5" stroke="#7a7a7a" stroke-width="1" stroke-dasharray="3 2" stroke-dashoffset="4.2"/>
<path d="M706.5 635.0 V870.5" stroke="#7a7a7a" stroke-width="1" stroke-dasharray="3 2" stroke-dashoffset="4.2"/>
<path d="M51.5 634.5 H765.5 V870.5" stroke="#8c8c8c" stroke-width="1" fill="none"/>
<path d="M51.5 870.5 H765.5" stroke="#8c8c8c" stroke-width="1" fill="none"/>
<path d="M51.5 634.5 V870.5" stroke="#c8c8c8" stroke-width="1" fill="none"/>
<path d="M51.5 870.5 V876" stroke="#c8c8c8" stroke-width="1"/>
<text x="51.5" y="887.5" font-size="11" font-weight="bold" fill="#c8c8c8" text-anchor="middle">6.6ms</text>
<path d="M111.5 870.5 V876" stroke="#c8c8c8" stroke-width="1"/>
<text x="111.5" y="887.5" font-size="11" font-weight="bold" fill="#c8c8c8" text-anchor="middle">6.8ms</text>
<path d="M170.5 870.5 V876" stroke="#c8c8c8" stroke-width="1"/>
<text x="170.5" y="887.5" font-size="11" font-weight="bold" fill="#c8c8c8" text-anchor="middle">7.0ms</text>
<path d="M229.5 870.5 V876" stroke="#c8c8c8" stroke-width="1"/>
<text x="229.5" y="887.5" font-size="11" font-weight="bold" fill="#c8c8c8" text-anchor="middle">7.2ms</text>
<path d="M289.5 870.5 V876" stroke="#c8c8c8" stroke-width="1"/>
<text x="289.5" y="887.5" font-size="11" font-weight="bold" fill="#c8c8c8" text-anchor="middle">7.4ms</text>
<path d="M348.5 870.5 V876" stroke="#c8c8c8" stroke-width="1"/>
<text x="348.5" y="887.5" font-size="11" font-weight="bold" fill="#c8c8c8" text-anchor="middle">7.6ms</text>
<path d="M408.5 870.5 V876" stroke="#c8c8c8" stroke-width="1"/>
<text x="408.5" y="887.5" font-size="11" font-weight="bold" fill="#c8c8c8" text-anchor="middle">7.8ms</text>
<path d="M468.5 870.5 V876" stroke="#c8c8c8" stroke-width="1"/>
<text x="468.5" y="887.5" font-size="11" font-weight="bold" fill="#c8c8c8" text-anchor="middle">8.0ms</text>
<path d="M527.5 870.5 V876" stroke="#c8c8c8" stroke-width="1"/>
<text x="527.5" y="887.5" font-size="11" font-weight="bold" fill="#c8c8c8" text-anchor="middle">8.2ms</text>
<path d="M587.5 870.5 V876" stroke="#c8c8c8" stroke-width="1"/>
<text x="587.5" y="887.5" font-size="11" font-weight="bold" fill="#c8c8c8" text-anchor="middle">8.4ms</text>
<path d="M646.5 870.5 V876" stroke="#c8c8c8" stroke-width="1"/>
<text x="646.5" y="887.5" font-size="11" font-weight="bold" fill="#c8c8c8" text-anchor="middle">8.6ms</text>
<path d="M706.5 870.5 V876" stroke="#c8c8c8" stroke-width="1"/>
<text x="706.5" y="887.5" font-size="11" font-weight="bold" fill="#c8c8c8" text-anchor="middle">8.8ms</text>
<path d="M765.5 870.5 V876" stroke="#c8c8c8" stroke-width="1"/>
<text x="765.5" y="887.5" font-size="11" font-weight="bold" fill="#c8c8c8" text-anchor="middle">9.0ms</text>
<text x="408.5" y="128" font-size="11" font-weight="bold" fill="#e02828" text-anchor="middle">V(3)</text>
<text x="407.5" y="378.7" font-size="11" font-weight="bold" fill="#40aaa0" text-anchor="middle">V(in)</text>
<text x="407.5" y="629.5" font-size="11" font-weight="bold" fill="#46c846" text-anchor="middle">V(out)</text>
<polyline points="51.5,139.5 123.5,139.5 124.0,140.5 170.5,140.5 170.5,362.5 172.0,360.5 230.0,359.5 319.0,358.5 319.5,356.0 320.5,290.0 321.0,200.0 322.5,139.5 385.5,139.5 386.0,140.5 467.5,140.5 467.5,363.0 469.0,361.5 560.0,359.5 616.5,358.5 617.0,355.0 618.0,280.0 619.0,200.0 620.5,139.5 648.0,139.5 648.5,140.5 734.0,140.5 734.5,141.5 764.5,141.5 765.5,262.0" fill="none" stroke="#c42a2a" stroke-width="1.1"/>
<polyline points="51.5,406.5 170.5,406.5 170.5,592.5 319.5,592.5 319.5,406.5 467.5,406.5 467.5,592.5 616.5,592.5 616.5,406.5 765.0,406.5" fill="none" stroke="#50aaa2" stroke-width="1.1"/>
<polyline points="51.5,666.2 169.3,676.2 170.5,678.7 170.5,843.9 319.0,829.9 320.5,700.0 322.0,664.7 330.0,664.7 467.0,676.2 468.0,678.7 468.0,843.9 616.8,829.9 618.3,700.0 619.8,664.7 628.0,664.7 765.0,676.0 765.5,767.0" fill="none" stroke="#50c85a" stroke-width="1.1"/>
<path d="M789.5 899.5 V92.5 Q789.5 89.5 792.5 89.5 H1573.5 Q1576.5 89.5 1576.5 92.5 V899.5 Z" fill="#d6e2ee" stroke="#50565c" stroke-width="1"/>
<rect x="790" y="90" width="786" height="26" fill="url(#inaT)"/>
<rect x="790" y="90" width="786" height="1" fill="#e2e8f0"/>
<rect x="790" y="90" width="1" height="808" fill="#f4f8fc"/>
<text x="814.50" y="110.50" font-size="11" font-weight="normal" fill="#8a949e" text-anchor="start" textLength="78.0" lengthAdjust="spacingAndGlyphs" >Мелодия 103.asc</text>
<g stroke="#0000e0" stroke-width="1.5" fill="none"><path d="M800 106 H803.5 M804 101 V111 M804 103 L808 99.5 M804 108.5 L808.5 113"/></g>
<rect x="1483.5" y="98.5" width="27" height="14" rx="2" fill="#d3dfeb" stroke="#8a9aae" stroke-width="1"/>
<rect x="1512.5" y="98.5" width="27" height="14" rx="2" fill="#d3dfeb" stroke="#8a9aae" stroke-width="1"/>
<rect x="1541.5" y="98.5" width="27" height="14" rx="2" fill="#d3dfeb" stroke="#8a9aae" stroke-width="1"/>
<rect x="1492.5" y="104.5" width="9" height="3.5" rx="1" fill="#fff" stroke="#6a7a8a" stroke-width="1"/>
<rect x="1521.5" y="101.5" width="8" height="7" fill="#fff" stroke="#6a7a8a" stroke-width="1"/><rect x="1523.5" y="103.5" width="4" height="2" fill="#6a7a8a"/>
<path d="M1551.5 102 L1559.5 109 M1559.5 102 L1551.5 109" stroke="#5a6a7a" stroke-width="3.6"/><path d="M1551.5 102 L1559.5 109 M1559.5 102 L1551.5 109" stroke="#fff" stroke-width="2"/>
<rect x="796" y="116" width="775" height="777" fill="#f0f0eb"/>
<rect x="796" y="116" width="775" height="1" fill="#6e6e6e"/><rect x="1570" y="116" width="1" height="777" fill="#ffffff"/><rect x="796" y="892" width="775" height="1" fill="#ffffff"/>
<rect x="796" y="116" width="1.6" height="777" fill="#777"/>
<path d="M922.30 195.25 L1460.42 195.25" stroke="#0000ff" stroke-width="2.0" fill="none" stroke-linecap="square"/>
<path d="M922.30 195.25 L922.30 392.12" stroke="#0000ff" stroke-width="2.0" fill="none" stroke-linecap="square"/>
<path d="M922.30 457.75 L922.30 759.62" stroke="#0000ff" stroke-width="2.0" fill="none" stroke-linecap="square"/>
<path d="M922.30 825.25 L922.30 838.38 L1394.80 838.38" stroke="#0000ff" stroke-width="2.0" fill="none" stroke-linecap="square"/>
<path d="M1184.80 339.62 L1184.80 444.62" stroke="#0000ff" stroke-width="2.0" fill="none" stroke-linecap="square"/>
<path d="M1184.80 260.88 L1184.80 274.00" stroke="#0000ff" stroke-width="2.0" fill="none" stroke-linecap="square"/>
<path d="M1184.80 497.12 L1184.80 536.50" stroke="#0000ff" stroke-width="2.0" fill="none" stroke-linecap="square"/>
<path d="M1184.80 602.12 L1184.80 707.12" stroke="#0000ff" stroke-width="2.0" fill="none" stroke-linecap="square"/>
<path d="M1184.80 785.88 L1184.80 838.38" stroke="#0000ff" stroke-width="2.0" fill="none" stroke-linecap="square"/>
<path d="M1184.80 260.88 L1119.17 260.88 L1119.17 392.12" stroke="#0000ff" stroke-width="2.0" fill="none" stroke-linecap="square"/>
<path d="M1119.17 444.62 L1119.17 510.25" stroke="#0000ff" stroke-width="2.0" fill="none" stroke-linecap="square"/>
<path d="M1001.05 326.50 L1001.05 339.62" stroke="#0000ff" stroke-width="2.0" fill="none" stroke-linecap="square"/>
<path d="M1001.05 405.25 L1001.05 589.00" stroke="#0000ff" stroke-width="2.0" fill="none" stroke-linecap="square"/>
<path d="M1001.05 667.75 L1001.05 759.62" stroke="#0000ff" stroke-width="2.0" fill="none" stroke-linecap="square"/>
<path d="M1001.05 825.25 L1001.05 838.38" stroke="#0000ff" stroke-width="2.0" fill="none" stroke-linecap="square"/>
<path d="M1001.05 510.25 L1027.30 510.25" stroke="#0000ff" stroke-width="2.0" fill="none" stroke-linecap="square"/>
<path d="M1092.92 510.25 L1407.92 510.25" stroke="#0000ff" stroke-width="2.0" fill="none" stroke-linecap="square"/>
<path d="M1460.42 510.25 L1512.92 510.25" stroke="#0000ff" stroke-width="2.0" fill="none" stroke-linecap="square"/>
<path d="M1184.80 352.75 L1250.42 352.75" stroke="#0000ff" stroke-width="2.0" fill="none" stroke-linecap="square"/>
<path d="M1302.92 313.38 L1302.92 195.25" stroke="#0000ff" stroke-width="2.0" fill="none" stroke-linecap="square"/>
<path d="M1302.92 392.12 L1302.92 431.50" stroke="#0000ff" stroke-width="2.0" fill="none" stroke-linecap="square"/>
<path d="M1302.92 497.12 L1302.92 549.62" stroke="#0000ff" stroke-width="2.0" fill="none" stroke-linecap="square"/>
<path d="M1302.92 615.25 L1302.92 641.50" stroke="#0000ff" stroke-width="2.0" fill="none" stroke-linecap="square"/>
<path d="M1302.92 418.38 L1342.30 418.38" stroke="#0000ff" stroke-width="2.0" fill="none" stroke-linecap="square"/>
<path d="M1394.80 379.00 L1394.80 195.25" stroke="#0000ff" stroke-width="2.0" fill="none" stroke-linecap="square"/>
<path d="M1394.80 457.75 L1394.80 694.00" stroke="#0000ff" stroke-width="2.0" fill="none" stroke-linecap="square"/>
<path d="M1394.80 772.75 L1394.80 838.38" stroke="#0000ff" stroke-width="2.0" fill="none" stroke-linecap="square"/>
<path d="M1184.80 680.88 L1250.42 680.88" stroke="#0000ff" stroke-width="2.0" fill="none" stroke-linecap="square"/>
<path d="M1302.92 720.25 L1302.92 759.62" stroke="#0000ff" stroke-width="2.0" fill="none" stroke-linecap="square"/>
<path d="M1302.92 825.25 L1302.92 838.38" stroke="#0000ff" stroke-width="2.0" fill="none" stroke-linecap="square"/>
<path d="M1302.92 733.38 L1342.30 733.38" stroke="#0000ff" stroke-width="2.0" fill="none" stroke-linecap="square"/>
<path d="M948.55 628.38 L843.55 628.38 L843.55 641.50" stroke="#0000ff" stroke-width="2.0" fill="none" stroke-linecap="square"/>
<path d="M843.55 694.00 L843.55 746.50" stroke="#0000ff" stroke-width="2.0" fill="none" stroke-linecap="square"/>
<path d="M987.92 707.12 L1001.05 707.12" stroke="#0000ff" stroke-width="2.0" fill="none" stroke-linecap="square"/>
<path d="M1001.05 746.50 L1132.30 746.50" stroke="#0000ff" stroke-width="2.0" fill="none" stroke-linecap="square"/>
<path d="M1184.80 195.25 L1184.80 201.81 L1197.92 208.38 L1171.67 221.50 L1197.92 234.62 L1171.67 247.75 L1184.80 254.31 L1184.80 260.88" stroke="#000000" stroke-width="2.0" fill="none"  stroke-linejoin="round"/>
<path d="M1184.80 274.00 L1184.80 280.56 L1197.92 287.12 L1171.67 300.25 L1197.92 313.38 L1171.67 326.50 L1184.80 333.06 L1184.80 339.62" stroke="#000000" stroke-width="2.0" fill="none"  stroke-linejoin="round"/>
<path d="M1001.05 339.62 L1001.05 346.19 L1014.17 352.75 L987.92 365.88 L1014.17 379.00 L987.92 392.12 L1001.05 398.69 L1001.05 405.25" stroke="#000000" stroke-width="2.0" fill="none"  stroke-linejoin="round"/>
<path d="M922.30 392.12 L922.30 398.69 L935.42 405.25 L909.17 418.38 L935.42 431.50 L909.17 444.62 L922.30 451.19 L922.30 457.75" stroke="#000000" stroke-width="2.0" fill="none"  stroke-linejoin="round"/>
<path d="M1302.92 431.50 L1302.92 438.06 L1316.05 444.62 L1289.80 457.75 L1316.05 470.88 L1289.80 484.00 L1302.92 490.56 L1302.92 497.12" stroke="#000000" stroke-width="2.0" fill="none"  stroke-linejoin="round"/>
<path d="M1184.80 536.50 L1184.80 543.06 L1197.92 549.62 L1171.67 562.75 L1197.92 575.88 L1171.67 589.00 L1184.80 595.56 L1184.80 602.12" stroke="#000000" stroke-width="2.0" fill="none"  stroke-linejoin="round"/>
<path d="M1302.92 549.62 L1302.92 556.19 L1316.05 562.75 L1289.80 575.88 L1316.05 589.00 L1289.80 602.12 L1302.92 608.69 L1302.92 615.25" stroke="#000000" stroke-width="2.0" fill="none"  stroke-linejoin="round"/>
<path d="M922.30 759.62 L922.30 766.19 L935.42 772.75 L909.17 785.88 L935.42 799.00 L909.17 812.12 L922.30 818.69 L922.30 825.25" stroke="#000000" stroke-width="2.0" fill="none"  stroke-linejoin="round"/>
<path d="M1001.05 759.62 L1001.05 766.19 L1014.17 772.75 L987.92 785.88 L1014.17 799.00 L987.92 812.12 L1001.05 818.69 L1001.05 825.25" stroke="#000000" stroke-width="2.0" fill="none"  stroke-linejoin="round"/>
<path d="M1302.92 759.62 L1302.92 766.19 L1316.05 772.75 L1289.80 785.88 L1316.05 799.00 L1289.80 812.12 L1302.92 818.69 L1302.92 825.25" stroke="#000000" stroke-width="2.0" fill="none"  stroke-linejoin="round"/>
<path d="M1512.92 510.25 L1512.92 516.81 L1526.05 523.38 L1499.80 536.50 L1526.05 549.62 L1499.80 562.75 L1512.92 569.31 L1512.92 575.88" stroke="#000000" stroke-width="2.0" fill="none"  stroke-linejoin="round"/>
<path d="M1027.30 510.25 L1033.86 510.25 L1040.42 497.12 L1053.55 523.38 L1066.67 497.12 L1079.80 523.38 L1086.36 510.25 L1092.92 510.25" stroke="#000000" stroke-width="2.0" fill="none"  stroke-linejoin="round"/>
<path d="M1460.42 195.25 L1460.42 201.81" stroke="#000000" stroke-width="2.0" fill="none"  stroke-linejoin="round"/>
<path d="M1460.42 254.31 L1460.42 260.88" stroke="#000000" stroke-width="2.0" fill="none"  stroke-linejoin="round"/>
<circle cx="1460.42" cy="228.06" r="25.45" stroke="#000000" stroke-width="2.0" fill="none"/>
<path d="M1453.92 212.48 L1466.92 212.48" stroke="#000000" stroke-width="1.6" fill="none"  stroke-linejoin="round"/>
<path d="M1460.42 206.48 L1460.42 218.48" stroke="#000000" stroke-width="1.6" fill="none"  stroke-linejoin="round"/>
<path d="M1453.92 244.88 L1466.92 244.88" stroke="#000000" stroke-width="1.6" fill="none"  stroke-linejoin="round"/>
<path d="M1446.07 260.88 L1474.78 260.88 L1460.42 275.64 L1446.07 260.88" stroke="#0000ff" stroke-width="2.0" fill="none" stroke-linejoin="miter"/>
<path d="M843.55 746.50 L843.55 753.06" stroke="#000000" stroke-width="2.0" fill="none"  stroke-linejoin="round"/>
<path d="M843.55 805.56 L843.55 812.12" stroke="#000000" stroke-width="2.0" fill="none"  stroke-linejoin="round"/>
<circle cx="843.55" cy="779.31" r="25.45" stroke="#000000" stroke-width="2.0" fill="none"/>
<path d="M837.05 763.73 L850.05 763.73" stroke="#000000" stroke-width="1.6" fill="none"  stroke-linejoin="round"/>
<path d="M843.55 757.73 L843.55 769.73" stroke="#000000" stroke-width="1.6" fill="none"  stroke-linejoin="round"/>
<path d="M837.05 796.13 L850.05 796.13" stroke="#000000" stroke-width="1.6" fill="none"  stroke-linejoin="round"/>
<path d="M829.19 812.12 L857.91 812.12 L843.55 826.89 L829.19 812.12" stroke="#0000ff" stroke-width="2.0" fill="none" stroke-linejoin="miter"/>
<path d="M1498.57 575.88 L1527.28 575.88 L1512.92 590.64 L1498.57 575.88" stroke="#0000ff" stroke-width="2.0" fill="none" stroke-linejoin="miter"/>
<path d="M1380.44 838.38 L1409.16 838.38 L1394.80 853.14 L1380.44 838.38" stroke="#0000ff" stroke-width="2.0" fill="none" stroke-linejoin="miter"/>
<path d="M986.69 274.00 L1015.41 274.00 L1001.05 259.23 L986.69 274.00" stroke="#0000ff" stroke-width="2.0" fill="none" stroke-linejoin="miter"/>
<path d="M1001.05 326.50 L1001.05 303.53" stroke="#000000" stroke-width="2.0" fill="none"  stroke-linejoin="round"/>
<path d="M987.92 303.53 L1014.17 303.53" stroke="#000000" stroke-width="2.0" fill="none"  stroke-linejoin="round"/>
<path d="M987.92 293.69 Q1001.05 300.25 1014.17 293.69" stroke="#000000" stroke-width="2.0" fill="none"/>
<path d="M1001.05 296.97 L1001.05 274.00" stroke="#000000" stroke-width="2.0" fill="none"  stroke-linejoin="round"/>
<path d="M1004.45 313.79 L1012.05 313.79" stroke="#000000" stroke-width="1.7" fill="none"  stroke-linejoin="round"/>
<path d="M1008.25 309.99 L1008.25 317.59" stroke="#000000" stroke-width="1.7" fill="none"  stroke-linejoin="round"/>
<path d="M1119.17 392.12 L1119.17 415.09" stroke="#000000" stroke-width="2.0" fill="none"  stroke-linejoin="round"/>
<path d="M1106.05 415.09 L1132.30 415.09" stroke="#000000" stroke-width="2.0" fill="none"  stroke-linejoin="round"/>
<path d="M1106.05 424.94 Q1119.17 418.38 1132.30 424.94" stroke="#000000" stroke-width="2.0" fill="none"/>
<path d="M1119.17 421.66 L1119.17 444.62" stroke="#000000" stroke-width="2.0" fill="none"  stroke-linejoin="round"/>
<path d="M1108.97 405.66 L1116.57 405.66" stroke="#000000" stroke-width="1.7" fill="none"  stroke-linejoin="round"/>
<path d="M1112.77 401.86 L1112.77 409.46" stroke="#000000" stroke-width="1.7" fill="none"  stroke-linejoin="round"/>
<path d="M1407.92 510.25 L1430.89 510.25" stroke="#000000" stroke-width="2.0" fill="none"  stroke-linejoin="round"/>
<path d="M1430.89 497.12 L1430.89 523.38" stroke="#000000" stroke-width="2.0" fill="none"  stroke-linejoin="round"/>
<path d="M1441.56 497.12 Q1435.00 510.25 1441.56 523.38" stroke="#000000" stroke-width="2.0" fill="none"/>
<path d="M1438.28 510.25 L1460.42 510.25" stroke="#000000" stroke-width="2.0" fill="none"  stroke-linejoin="round"/>
<path d="M1417.03 504.05 L1424.62 504.05" stroke="#000000" stroke-width="1.7" fill="none"  stroke-linejoin="round"/>
<path d="M1420.83 500.25 L1420.83 507.85" stroke="#000000" stroke-width="1.7" fill="none"  stroke-linejoin="round"/>
<path d="M843.55 641.50 L843.55 664.47" stroke="#000000" stroke-width="2.0" fill="none"  stroke-linejoin="round"/>
<path d="M843.55 671.03 L843.55 694.00" stroke="#000000" stroke-width="2.0" fill="none"  stroke-linejoin="round"/>
<path d="M830.42 664.47 L856.67 664.47" stroke="#000000" stroke-width="2.0" fill="none"  stroke-linejoin="round"/>
<path d="M830.42 671.03 L856.67 671.03" stroke="#000000" stroke-width="2.0" fill="none"  stroke-linejoin="round"/>
<path d="M935.42 707.12 L958.39 707.12" stroke="#000000" stroke-width="2.0" fill="none"  stroke-linejoin="round"/>
<path d="M964.96 707.12 L987.92 707.12" stroke="#000000" stroke-width="2.0" fill="none"  stroke-linejoin="round"/>
<path d="M958.39 694.00 L958.39 720.25" stroke="#000000" stroke-width="2.0" fill="none"  stroke-linejoin="round"/>
<path d="M964.96 694.00 L964.96 720.25" stroke="#000000" stroke-width="2.0" fill="none"  stroke-linejoin="round"/>
<path d="M1184.80 444.62 L1184.80 457.75" stroke="#000000" stroke-width="2.0" fill="none"  stroke-linejoin="round"/>
<path d="M1171.67 460.62 L1197.92 460.62 L1184.80 480.31 L1171.67 460.62" stroke="#000000" stroke-width="2.0" fill="none" stroke-linejoin="miter"/>
<path d="M1171.67 480.31 L1197.92 480.31" stroke="#000000" stroke-width="2.0" fill="none"  stroke-linejoin="round"/>
<path d="M1184.80 480.31 L1184.80 497.12" stroke="#000000" stroke-width="2.0" fill="none"  stroke-linejoin="round"/>
<path d="M1250.42 352.75 L1263.55 352.75" stroke="#000000" stroke-width="2.0" fill="none"  stroke-linejoin="round"/>
<path d="M1263.55 326.50 L1263.55 379.00" stroke="#000000" stroke-width="2.0" fill="none"  stroke-linejoin="round"/>
<path d="M1263.55 339.62 L1302.92 313.38" stroke="#000000" stroke-width="2.0" fill="none"  stroke-linejoin="round"/>
<path d="M1263.55 365.88 L1284.38 380.18" stroke="#000000" stroke-width="2.0" fill="none"  stroke-linejoin="round"/>
<path d="M1302.92 392.12 L1281.12 383.43 L1287.62 376.93 L1302.92 392.12" stroke="#000000" stroke-width="2.0" fill="#f0f0eb" stroke-linejoin="miter"/>
<path d="M1342.30 418.38 L1355.42 418.38" stroke="#000000" stroke-width="2.0" fill="none"  stroke-linejoin="round"/>
<path d="M1355.42 392.12 L1355.42 444.62" stroke="#000000" stroke-width="2.0" fill="none"  stroke-linejoin="round"/>
<path d="M1355.42 405.25 L1394.80 379.00" stroke="#000000" stroke-width="2.0" fill="none"  stroke-linejoin="round"/>
<path d="M1355.42 431.50 L1376.25 445.80" stroke="#000000" stroke-width="2.0" fill="none"  stroke-linejoin="round"/>
<path d="M1394.80 457.75 L1373.00 449.05 L1379.50 442.55 L1394.80 457.75" stroke="#000000" stroke-width="2.0" fill="#f0f0eb" stroke-linejoin="miter"/>
<path d="M1342.30 733.38 L1355.42 733.38" stroke="#000000" stroke-width="2.0" fill="none"  stroke-linejoin="round"/>
<path d="M1355.42 707.12 L1355.42 759.62" stroke="#000000" stroke-width="2.0" fill="none"  stroke-linejoin="round"/>
<path d="M1355.42 720.25 L1394.80 694.00" stroke="#000000" stroke-width="2.0" fill="none"  stroke-linejoin="round"/>
<path d="M1355.42 746.50 L1376.25 760.80" stroke="#000000" stroke-width="2.0" fill="none"  stroke-linejoin="round"/>
<path d="M1394.80 772.75 L1373.00 764.05 L1379.50 757.55 L1394.80 772.75" stroke="#000000" stroke-width="2.0" fill="#f0f0eb" stroke-linejoin="miter"/>
<path d="M1132.30 746.50 L1145.42 746.50" stroke="#000000" stroke-width="2.0" fill="none"  stroke-linejoin="round"/>
<path d="M1145.42 720.25 L1145.42 772.75" stroke="#000000" stroke-width="2.0" fill="none"  stroke-linejoin="round"/>
<path d="M1145.42 733.38 L1184.80 707.12" stroke="#000000" stroke-width="2.0" fill="none"  stroke-linejoin="round"/>
<path d="M1145.42 759.62 L1166.25 773.92" stroke="#000000" stroke-width="2.0" fill="none"  stroke-linejoin="round"/>
<path d="M1184.80 785.88 L1163.00 777.17 L1169.50 770.67 L1184.80 785.88" stroke="#000000" stroke-width="2.0" fill="#f0f0eb" stroke-linejoin="miter"/>
<path d="M1250.42 680.88 L1263.55 680.88" stroke="#000000" stroke-width="2.0" fill="none"  stroke-linejoin="round"/>
<path d="M1263.55 654.62 L1263.55 707.12" stroke="#000000" stroke-width="2.0" fill="none"  stroke-linejoin="round"/>
<path d="M1263.55 667.75 L1302.92 641.50" stroke="#000000" stroke-width="2.0" fill="none"  stroke-linejoin="round"/>
<path d="M1263.55 694.00 L1302.92 720.25" stroke="#000000" stroke-width="2.0" fill="none"  stroke-linejoin="round"/>
<path d="M1264.15 667.15 L1286.65 659.15 L1279.75 652.25 L1264.15 667.15" stroke="#000000" stroke-width="2.0" fill="#f0f0eb" stroke-linejoin="miter"/>
<path d="M948.55 628.38 L961.67 628.38" stroke="#000000" stroke-width="2.0" fill="none"  stroke-linejoin="round"/>
<path d="M961.67 602.12 L961.67 654.62" stroke="#000000" stroke-width="2.0" fill="none"  stroke-linejoin="round"/>
<path d="M961.67 615.25 L1001.05 589.00" stroke="#000000" stroke-width="2.0" fill="none"  stroke-linejoin="round"/>
<path d="M961.67 641.50 L1001.05 667.75" stroke="#000000" stroke-width="2.0" fill="none"  stroke-linejoin="round"/>
<path d="M962.27 614.65 L984.77 606.65 L977.88 599.75 L962.27 614.65" stroke="#000000" stroke-width="2.0" fill="#f0f0eb" stroke-linejoin="miter"/>
<rect x="932.42" y="704.12" width="6" height="6" fill="none" stroke="#0000ff" stroke-width="1.5"/>
<rect x="1179.80" y="190.25" width="10" height="10" fill="#0000ff"/>
<rect x="1297.92" y="190.25" width="10" height="10" fill="#0000ff"/>
<rect x="1389.80" y="190.25" width="10" height="10" fill="#0000ff"/>
<rect x="1179.80" y="255.88" width="10" height="10" fill="#0000ff"/>
<rect x="1179.80" y="347.75" width="10" height="10" fill="#0000ff"/>
<rect x="1297.92" y="413.38" width="10" height="10" fill="#0000ff"/>
<rect x="996.05" y="505.25" width="10" height="10" fill="#0000ff"/>
<rect x="1114.17" y="505.25" width="10" height="10" fill="#0000ff"/>
<rect x="1297.92" y="505.25" width="10" height="10" fill="#0000ff"/>
<rect x="1389.80" y="505.25" width="10" height="10" fill="#0000ff"/>
<rect x="917.30" y="623.38" width="10" height="10" fill="#0000ff"/>
<rect x="996.05" y="702.12" width="10" height="10" fill="#0000ff"/>
<rect x="996.05" y="741.50" width="10" height="10" fill="#0000ff"/>
<rect x="1179.80" y="675.88" width="10" height="10" fill="#0000ff"/>
<rect x="1297.92" y="728.38" width="10" height="10" fill="#0000ff"/>
<rect x="996.05" y="833.38" width="10" height="10" fill="#0000ff"/>
<rect x="1179.80" y="833.38" width="10" height="10" fill="#0000ff"/>
<rect x="1297.92" y="833.38" width="10" height="10" fill="#0000ff"/>
<text x="889.2" y="149.8" font-size="18" font-weight="bold" fill="#f07818" stroke="#f07818" stroke-width="0.45" textLength="185.2" lengthAdjust="spacingAndGlyphs">.tran 0 50m 40m 5u</text>
<text x="1270.8" y="143.5" font-size="18" font-weight="bold" fill="#f07818" stroke="#f07818" stroke-width="0.45" textLength="167.3" lengthAdjust="spacingAndGlyphs">.four 1000 v (out)</text>
<text x="1201.1" y="222.2" font-size="18" font-weight="bold" fill="#006400" stroke="#006400" stroke-width="0.45" textLength="25.8" lengthAdjust="spacingAndGlyphs">R5</text>
<text x="1202.1" y="252.1" font-size="18" font-weight="bold" fill="#006400" stroke="#006400" stroke-width="0.45" textLength="35.3" lengthAdjust="spacingAndGlyphs">330</text>
<text x="1201.1" y="301.1" font-size="18" font-weight="bold" fill="#006400" stroke="#006400" stroke-width="0.45" textLength="25.8" lengthAdjust="spacingAndGlyphs">R6</text>
<text x="1202.1" y="330.6" font-size="18" font-weight="bold" fill="#006400" stroke="#006400" stroke-width="0.45" textLength="34.3" lengthAdjust="spacingAndGlyphs">3k3</text>
<text x="1480.1" y="202.8" font-size="18" font-weight="bold" fill="#006400" stroke="#006400" stroke-width="0.45" textLength="23.7" lengthAdjust="spacingAndGlyphs">V1</text>
<text x="1481.2" y="268.5" font-size="18" font-weight="bold" fill="#006400" stroke="#006400" stroke-width="0.45" textLength="23.2" lengthAdjust="spacingAndGlyphs">38</text>
<text x="960.9" y="289.6" font-size="18" font-weight="bold" fill="#006400" stroke="#006400" stroke-width="0.45" textLength="25.5" lengthAdjust="spacingAndGlyphs">C2</text>
<text x="947.8" y="327.7" font-size="18" font-weight="bold" fill="#006400" stroke="#006400" stroke-width="0.45" textLength="47.6" lengthAdjust="spacingAndGlyphs">200μ</text>
<text x="1017.7" y="366.7" font-size="18" font-weight="bold" fill="#006400" stroke="#006400" stroke-width="0.45" textLength="25.7" lengthAdjust="spacingAndGlyphs">R8</text>
<text x="1017.7" y="396.3" font-size="18" font-weight="bold" fill="#006400" stroke="#006400" stroke-width="0.45" textLength="23.2" lengthAdjust="spacingAndGlyphs">75</text>
<text x="1295.8" y="341.6" font-size="18" font-weight="bold" fill="#006400" stroke="#006400" stroke-width="0.45" textLength="26.1" lengthAdjust="spacingAndGlyphs">Q2</text>
<text x="1278.7" y="366.2" font-size="18" font-weight="bold" fill="#006400" stroke="#006400" stroke-width="0.45" textLength="72.4" lengthAdjust="spacingAndGlyphs">GT404V</text>
<text x="938.7" y="419.4" font-size="18" font-weight="bold" fill="#006400" stroke="#006400" stroke-width="0.45" textLength="25.5" lengthAdjust="spacingAndGlyphs">R9</text>
<text x="938.7" y="448.6" font-size="18" font-weight="bold" fill="#006400" stroke="#006400" stroke-width="0.45" textLength="47.5" lengthAdjust="spacingAndGlyphs">122k</text>
<text x="1124.9" y="406.6" font-size="18" font-weight="bold" fill="#006400" stroke="#006400" stroke-width="0.45" textLength="25.6" lengthAdjust="spacingAndGlyphs">C1</text>
<text x="1126.2" y="446.8" font-size="18" font-weight="bold" fill="#006400" stroke="#006400" stroke-width="0.45" textLength="48.2" lengthAdjust="spacingAndGlyphs">100μ</text>
<text x="1387.9" y="412.6" font-size="18" font-weight="bold" fill="#006400" stroke="#006400" stroke-width="0.45" textLength="27.0" lengthAdjust="spacingAndGlyphs">Q4</text>
<text x="1389.0" y="442.0" font-size="18" font-weight="bold" fill="#006400" stroke="#006400" stroke-width="0.45" textLength="88.9" lengthAdjust="spacingAndGlyphs">KT805BM</text>
<text x="1191.4" y="452.5" font-size="18" font-weight="bold" fill="#006400" stroke="#006400" stroke-width="0.45" textLength="26.8" lengthAdjust="spacingAndGlyphs">D2</text>
<text x="1191.4" y="505.0" font-size="18" font-weight="bold" fill="#006400" stroke="#006400" stroke-width="0.45" textLength="14.6" lengthAdjust="spacingAndGlyphs">D</text>
<text x="1246.1" y="505.0" font-size="18" font-weight="bold" fill="#a00000" stroke="#a00000" stroke-width="0.45" textLength="10.5" lengthAdjust="spacingAndGlyphs">3</text>
<text x="1318.8" y="458.6" font-size="18" font-weight="bold" fill="#006400" stroke="#006400" stroke-width="0.45" textLength="26.1" lengthAdjust="spacingAndGlyphs">R1</text>
<text x="1318.8" y="488.0" font-size="18" font-weight="bold" fill="#006400" stroke="#006400" stroke-width="0.45" textLength="36.4" lengthAdjust="spacingAndGlyphs">100</text>
<text x="1047.4" y="492.2" font-size="18" font-weight="bold" fill="#006400" stroke="#006400" stroke-width="0.45" textLength="25.3" lengthAdjust="spacingAndGlyphs">R7</text>
<text x="1042.0" y="541.6" font-size="18" font-weight="bold" fill="#006400" stroke="#006400" stroke-width="0.45" textLength="35.1" lengthAdjust="spacingAndGlyphs">1k8</text>
<text x="1421.4" y="492.8" font-size="18" font-weight="bold" fill="#006400" stroke="#006400" stroke-width="0.45" textLength="24.3" lengthAdjust="spacingAndGlyphs">C4</text>
<text x="1457.3" y="505.6" font-size="18" font-weight="bold" fill="#a00000" stroke="#a00000" stroke-width="0.45" textLength="32.1" lengthAdjust="spacingAndGlyphs">out</text>
<text x="1405.2" y="543.2" font-size="18" font-weight="bold" fill="#006400" stroke="#006400" stroke-width="0.45" textLength="59.7" lengthAdjust="spacingAndGlyphs">1000μ</text>
<text x="1529.8" y="537.5" font-size="18" font-weight="bold" fill="#006400" stroke="#006400" stroke-width="0.45" textLength="24.8" lengthAdjust="spacingAndGlyphs">R4</text>
<text x="1529.8" y="567.1" font-size="18" font-weight="bold" fill="#006400" stroke="#006400" stroke-width="0.45" textLength="12.1" lengthAdjust="spacingAndGlyphs">4</text>
<text x="1201.1" y="562.9" font-size="18" font-weight="bold" fill="#006400" stroke="#006400" stroke-width="0.45" textLength="37.8" lengthAdjust="spacingAndGlyphs">R12</text>
<text x="1202.1" y="592.8" font-size="18" font-weight="bold" fill="#006400" stroke="#006400" stroke-width="0.45" textLength="22.8" lengthAdjust="spacingAndGlyphs">33</text>
<text x="1319.7" y="576.2" font-size="18" font-weight="bold" fill="#006400" stroke="#006400" stroke-width="0.45" textLength="25.6" lengthAdjust="spacingAndGlyphs">R3</text>
<text x="1320.7" y="605.5" font-size="18" font-weight="bold" fill="#006400" stroke="#006400" stroke-width="0.45" textLength="23.4" lengthAdjust="spacingAndGlyphs">33</text>
<text x="872.9" y="622.7" font-size="18" font-weight="bold" fill="#a00000" stroke="#a00000" stroke-width="0.45" textLength="18.7" lengthAdjust="spacingAndGlyphs">in</text>
<text x="990.2" y="621.8" font-size="18" font-weight="bold" fill="#006400" stroke="#006400" stroke-width="0.45" textLength="65.7" lengthAdjust="spacingAndGlyphs">MP40A</text>
<text x="978.0" y="646.8" font-size="18" font-weight="bold" fill="#006400" stroke="#006400" stroke-width="0.45" textLength="26.2" lengthAdjust="spacingAndGlyphs">Q6</text>
<text x="850.1" y="655.0" font-size="18" font-weight="bold" fill="#006400" stroke="#006400" stroke-width="0.45" textLength="24.8" lengthAdjust="spacingAndGlyphs">C3</text>
<text x="850.1" y="696.5" font-size="18" font-weight="bold" fill="#006400" stroke="#006400" stroke-width="0.45" textLength="25.1" lengthAdjust="spacingAndGlyphs">5μ</text>
<text x="1293.3" y="673.5" font-size="18" font-weight="bold" fill="#006400" stroke="#006400" stroke-width="0.45" textLength="73.4" lengthAdjust="spacingAndGlyphs">GT402A</text>
<text x="1284.3" y="697.8" font-size="18" font-weight="bold" fill="#006400" stroke="#006400" stroke-width="0.45" textLength="27.0" lengthAdjust="spacingAndGlyphs">Q5</text>
<text x="949.3" y="689.2" font-size="18" font-weight="bold" fill="#006400" stroke="#006400" stroke-width="0.45" textLength="24.7" lengthAdjust="spacingAndGlyphs">C5</text>
<text x="931.3" y="739.0" font-size="18" font-weight="bold" fill="#006400" stroke="#006400" stroke-width="0.45" textLength="61.0" lengthAdjust="spacingAndGlyphs">1000p</text>
<text x="1105.6" y="707.9" font-size="18" font-weight="bold" fill="#006400" stroke="#006400" stroke-width="0.45" textLength="61.0" lengthAdjust="spacingAndGlyphs">P307A</text>
<text x="1159.3" y="747.0" font-size="18" font-weight="bold" fill="#006400" stroke="#006400" stroke-width="0.45" textLength="27.3" lengthAdjust="spacingAndGlyphs">Q3</text>
<text x="1075.1" y="741.6" font-size="18" font-weight="bold" fill="#a00000" stroke="#a00000" stroke-width="0.45" textLength="10.0" lengthAdjust="spacingAndGlyphs">1</text>
<text x="863.2" y="753.0" font-size="18" font-weight="bold" fill="#006400" stroke="#006400" stroke-width="0.45" textLength="24.5" lengthAdjust="spacingAndGlyphs">V3</text>
<text x="1388.2" y="727.7" font-size="18" font-weight="bold" fill="#006400" stroke="#006400" stroke-width="0.45" textLength="26.1" lengthAdjust="spacingAndGlyphs">Q1</text>
<text x="1388.2" y="757.0" font-size="18" font-weight="bold" fill="#006400" stroke="#006400" stroke-width="0.45" textLength="89.9" lengthAdjust="spacingAndGlyphs">KT805BM</text>
<text x="934.5" y="794.8" font-size="18" font-weight="bold" fill="#006400" stroke="#006400" stroke-width="0.45" textLength="38.5" lengthAdjust="spacingAndGlyphs">R10</text>
<text x="928.8" y="821.2" font-size="18" font-weight="bold" fill="#006400" stroke="#006400" stroke-width="0.45" textLength="46.9" lengthAdjust="spacingAndGlyphs">100k</text>
<text x="1017.0" y="786.9" font-size="18" font-weight="bold" fill="#006400" stroke="#006400" stroke-width="0.45" textLength="38.0" lengthAdjust="spacingAndGlyphs">R11</text>
<text x="1018.2" y="815.1" font-size="18" font-weight="bold" fill="#006400" stroke="#006400" stroke-width="0.45" textLength="35.1" lengthAdjust="spacingAndGlyphs">4k7</text>
<text x="1318.5" y="787.0" font-size="18" font-weight="bold" fill="#006400" stroke="#006400" stroke-width="0.45" textLength="26.8" lengthAdjust="spacingAndGlyphs">R2</text>
<text x="1318.5" y="815.3" font-size="18" font-weight="bold" fill="#006400" stroke="#006400" stroke-width="0.45" textLength="37.6" lengthAdjust="spacingAndGlyphs">100</text>
<text x="820.2" y="881.2" font-size="18" font-weight="bold" fill="#006400" stroke="#006400" stroke-width="0.45" textLength="322.2" lengthAdjust="spacingAndGlyphs">PULSE(0 0.4 499u 1u 1u 499u 1m)</text>
<text x="0" y="0" font-size="18" font-weight="bold" fill="#a00000" transform="translate(1180.3,646.4) rotate(-90)" textLength="10.2" lengthAdjust="spacingAndGlyphs">2</text>
<rect x="0" y="900" width="1579" height="18" fill="#f0f0f0"/>
<rect x="0" y="902" width="1579" height="1" fill="#dcdcdc"/>
<text x="0.80" y="914.60" font-size="11" font-weight="normal" fill="#1a1a1a" text-anchor="start" textLength="54.5" lengthAdjust="spacingAndGlyphs" >x = 8.503ms</text>
<text x="64.50" y="914.60" font-size="11" font-weight="normal" fill="#1a1a1a" text-anchor="start" textLength="40.5" lengthAdjust="spacingAndGlyphs" >y = 6.13V</text>
<text x="1535.30" y="914.40" font-size="11" font-weight="normal" fill="#1a1a1a" text-anchor="start" textLength="40.0" lengthAdjust="spacingAndGlyphs" >Alternate</text>
</svg></body></html>
